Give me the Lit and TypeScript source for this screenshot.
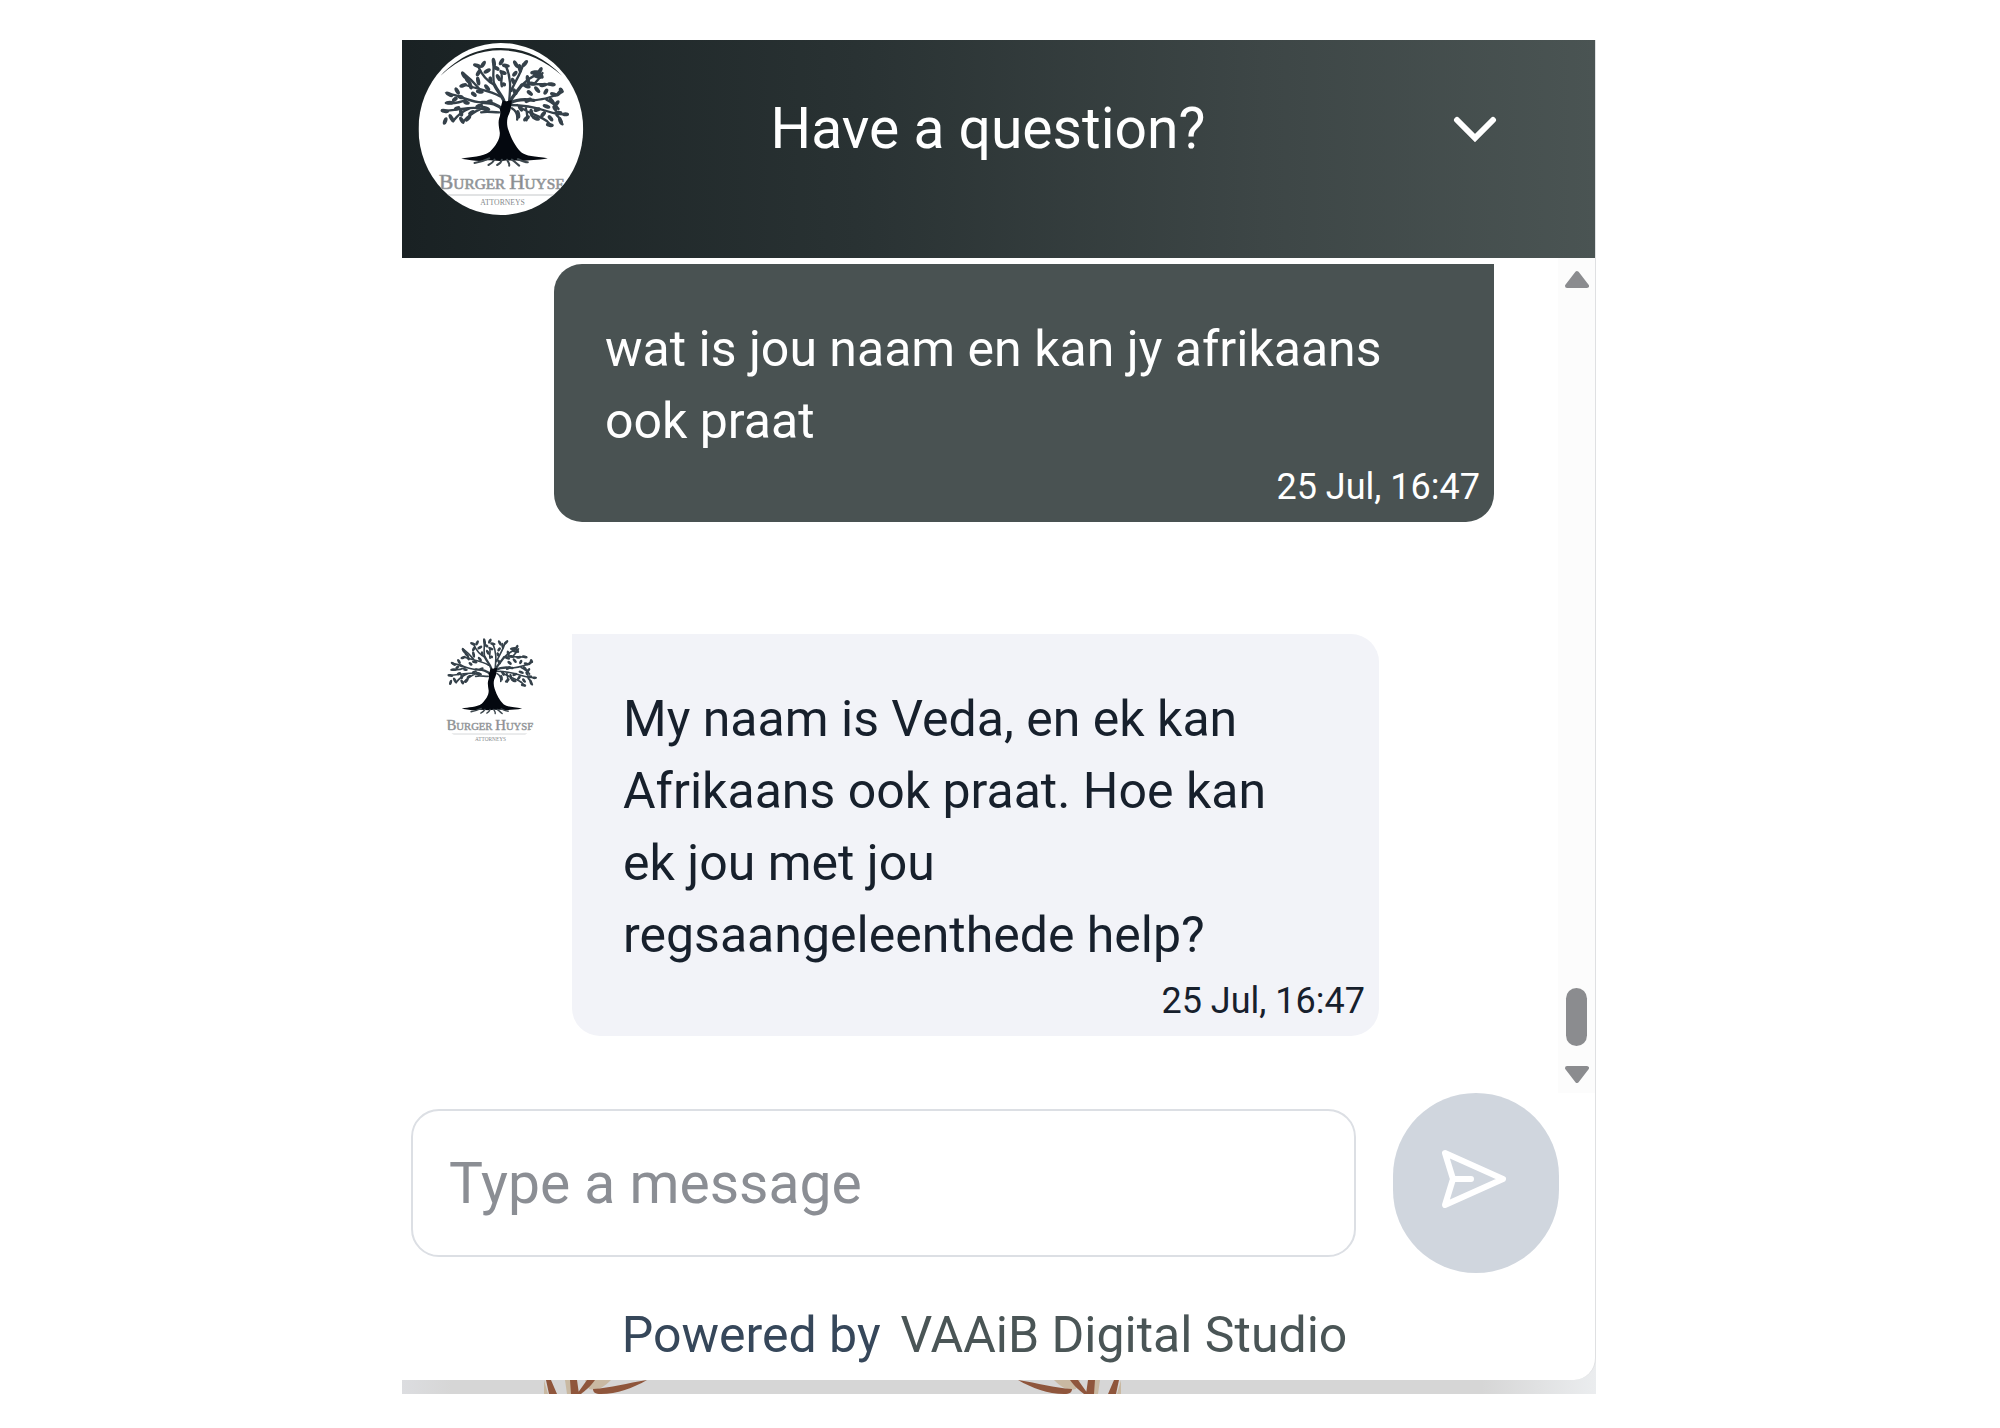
import { LitElement, html, css, svg } from "lit";
import { customElement, property } from "lit/decorators.js";

interface Message {
  from: "user" | "bot";
  text: string;
  time: string;
}

const messages: Message[] = [
  { from: "user", text: "wat is jou naam en kan jy afrikaans ook praat", time: "25 Jul, 16:47" },
  {
    from: "bot",
    text: "My naam is Veda, en ek kan Afrikaans ook praat. Hoe kan ek jou met jou regsaangeleenthede help?",
    time: "25 Jul, 16:47",
  },
];

// Leaves of the crown: x, y, rotation in degrees, half length.
const leaves: number[][] = [
  [135, 240, 10, 13], [136, 270, -70, 12], [155, 262, 60, 14], [150, 215, 0, 13], [148, 190, 30, 13],
  [165, 205, -40, 10], [172, 180, 60, 12], [182, 198, 20, 10], [186, 268, 60, 12], [184, 245, 80, 12],
  [205, 262, -50, 12], [215, 245, -30, 11], [192, 133, 60, 13], [205, 150, 50, 14], [190, 163, -20, 12],
  [212, 165, 70, 11], [235, 150, 80, 14], [236, 125, -60, 12], [232, 104, 20, 13], [250, 100, -60, 12],
  [262, 120, -30, 12], [240, 182, 10, 12], [222, 190, 40, 10], [262, 170, 50, 12], [282, 94, 80, 14],
  [290, 112, 30, 10], [305, 92, -60, 12], [318, 104, 10, 12], [310, 125, 20, 11], [296, 140, 60, 12],
  [348, 100, 60, 13], [360, 112, 80, 13], [375, 98, -50, 13], [345, 128, -50, 10], [312, 160, 20, 7],
  [405, 124, -10, 14], [420, 120, -60, 13], [412, 136, 20, 14], [424, 134, 60, 10], [384, 146, 80, 14],
  [380, 165, 20, 13], [398, 158, 10, 12], [430, 162, -10, 12], [455, 160, 10, 13], [412, 176, 50, 12],
  [438, 182, -60, 10], [462, 190, 20, 12], [478, 186, -50, 12], [484, 178, 60, 9], [456, 210, 50, 12],
  [470, 218, -50, 12], [440, 226, 20, 12], [475, 245, 0, 13], [497, 250, 0, 10], [465, 232, 60, 10],
  [452, 262, 50, 11], [482, 270, 70, 13], [450, 282, 10, 12], [430, 250, -50, 11], [408, 262, 20, 13],
  [395, 246, 80, 13], [380, 262, -40, 12], [355, 250, 80, 13], [362, 232, 60, 11], [412, 236, -20, 11],
  [258, 232, 20, 14], [238, 225, -20, 12], [268, 212, -20, 11], [345, 182, 60, 11], [385, 208, -30, 12],
  [172, 232, -20, 10], [200, 215, 10, 10], [340, 150, 70, 10], [272, 146, 80, 10], [390, 186, 40, 11],
];

@customElement("tree-logo")
class TreeLogo extends LitElement {
  @property({ type: Boolean }) ring = false;

  static styles = css`
    :host { display: block; }
    .art { display: block; width: 100%; height: 100%; }
  `;

  render() {
    return html`
      <svg class="art" viewBox="56 36 495 516" role="img" aria-label="Burger Huyse">
        <defs>
          <clipPath id="disc"><ellipse cx="303" cy="294" rx="247" ry="258" /></clipPath>
        </defs>
        <g clip-path="url(#disc)">
          <rect x="56" y="36" width="495" height="516" fill="#fff" />
          ${this.ring
            ? svg`<path fill="#1d2527" d="M122 134C180 74 238 51 303 51s126 25 184 83C430 84 368 58 303 58S180 81 122 134z" />`
            : null}
          <g fill="none" stroke="#35414a" stroke-linecap="round" stroke-linejoin="round">
            <path stroke-width="10" d="M316 240C318 200 296 188 284 162M320 225C340 195 352 180 366 162M312 238C286 214 270 216 246 214M330 216C352 204 376 204 402 208" />
            <path stroke-width="7" d="M284 162C276 140 284 118 280 92M284 162C262 150 246 132 236 108M300 196C274 180 240 176 196 162M328 210C332 168 334 140 318 104M334 180C346 150 362 130 370 100M366 162C382 146 398 136 414 128M366 162C400 156 430 162 462 160M402 208C434 204 456 200 488 182M246 214C214 214 190 196 144 188M260 238C224 222 190 236 128 240M246 232C218 244 204 256 190 272M330 222C370 222 410 230 440 240S480 250 504 250M352 222C372 240 404 250 428 262S446 280 456 284M298 244C276 244 262 240 244 244M336 232C350 240 354 250 352 266M378 232C382 244 384 256 380 268M240 176C226 160 216 146 192 128M210 232C196 236 176 250 160 270M200 206C184 214 166 218 138 216M440 206C456 214 468 222 476 234M470 252C480 260 484 270 488 280M404 158C416 146 422 138 428 126M302 120C312 136 300 150 306 166" />
          </g>
          <g fill="#35414a">
            ${leaves.map(([x, y, r, l]) => svg`<ellipse cx="${x}" cy="${y}" rx="${l}" ry="6" transform="rotate(${r} ${x} ${y})" />`)}
          </g>
          <path fill="#04080f" d="M300 234C306 226 304 216 310 208C320 214 324 208 336 208C334 222 334 236 328 248C320 262 320 282 326 298C334 322 346 346 364 364C378 376 404 376 444 382C414 388 386 388 366 390C350 386 340 390 322 388C300 392 282 388 262 388C238 392 214 388 184 383C214 376 248 378 270 362C288 344 300 326 300 306C298 290 294 276 298 262C302 252 302 244 300 234z" />
          <path fill="none" stroke="#3d474d" stroke-width="6" stroke-linecap="round" d="M268 382C252 390 240 394 224 396M284 386C280 394 274 398 266 402M306 386C304 394 300 398 292 402M322 386C324 394 330 396 328 404M336 386C346 392 350 398 358 404M354 384C366 390 374 394 384 394" />
          <text x="306" y="475" text-anchor="middle" font-family="Liberation Serif, serif" fill="#85898c" stroke="#9a9da0" stroke-width="2"><tspan font-size="64">B</tspan><tspan font-size="46">URGER </tspan><tspan font-size="64">H</tspan><tspan font-size="46">UYSE</tspan></text>
          <path stroke="#c4c7c9" stroke-width="3" d="M130 492H476" />
          <text x="308" y="523" text-anchor="middle" font-size="23" font-family="Liberation Serif, serif" fill="#85898c">ATTORNEYS</text>
        </g>
      </svg>
    `;
  }
}

@customElement("chat-message")
class ChatMessage extends LitElement {
  @property({ attribute: false }) message!: Message;

  static styles = css`
    :host { display: block; }
    .row { display: flex; align-items: flex-start; }
    .row.user { padding: 0 64px 0 152px; }
    .row.bot { padding: 0 179px 0 30px; gap: 25px; }
    .avatar { flex: none; width: 115px; height: 120px; margin-top: -6px; }
    .bubble { flex: 1; min-width: 0; padding-bottom: 14px; }
    .user .bubble { background: #495252; color: #fff; border-radius: 28px 0 28px 28px; }
    .bot .bubble { background: #f2f3f8; color: #17202c; border-radius: 0 28px 28px 28px; }
    .text { margin: 0; padding: 49px 52px 0 51px; font-size: 50px; line-height: 72px; }
    .time { display: block; padding: 9px 14px 0; font-size: 36px; line-height: 42px; text-align: right; }
  `;

  render() {
    const m = this.message;
    return html`
      <div class="row ${m.from}">
        ${m.from === "bot" ? html`<tree-logo class="avatar"></tree-logo>` : null}
        <div class="bubble">
          <p class="text">${m.text}</p>
          <time class="time">${m.time}</time>
        </div>
      </div>
    `;
  }
}

@customElement("app-root")
class AppRoot extends LitElement {
  static styles = css`
    :host {
      display: block;
      box-sizing: border-box;
      min-height: 100vh;
      padding: 40px 2px 34px 0;
      background: #fff;
      font-family: Roboto, "Liberation Sans", sans-serif;
    }
    * { box-sizing: border-box; }
    .frame {
      max-width: 1194px;
      margin: 0 auto;
      background: linear-gradient(90deg, #dcdde0 0, #d6d6d6 50px, #d6d6d6 1080px, #ebedef 100%);
    }
    .widget {
      background: #fff;
      border-right: 1px solid #dfe0e2;
      border-bottom-right-radius: 22px;
      overflow: hidden;
    }
    .header {
      display: grid;
      grid-template-columns: 166px 1fr 166px;
      align-items: center;
      padding: 3px 38px 43px 16px;
      margin-right: -1px;
      background: linear-gradient(90deg, #192123, #293233 38%, #3d4646 72%, #4a5453);
      color: #fff;
    }
    .logo { width: 166px; height: 172px; }
    .title { margin: 0; font-size: 57px; line-height: 68px; font-weight: 400; text-align: center; }
    .icon-button {
      display: flex;
      align-items: center;
      justify-content: center;
      border: 0;
      padding: 0;
      background: none;
      color: #fff;
      height: 100px;
      cursor: pointer;
    }
    .icon { display: block; }
    .body { display: flex; }
    .messages {
      flex: 1;
      min-width: 0;
      display: flex;
      flex-direction: column;
      gap: 112px;
      padding: 6px 0 57px;
    }
    .scrollbar {
      flex: none;
      width: 37px;
      display: flex;
      flex-direction: column;
      align-items: center;
      padding: 12px 0 9px;
      background: #fcfcfc;
    }
    .thumb { width: 21px; height: 58px; margin: auto 0 19px; border-radius: 11px; background: #8b8c8f; }
    .composer { display: flex; align-items: center; gap: 37px; padding: 0 36px 0 9px; }
    .field {
      flex: 1;
      min-width: 0;
      height: 148px;
      padding: 0 36px;
      border: 2px solid #dcdfe4;
      border-radius: 28px;
      outline: none;
      background: #fff;
      color: #17202c;
      font: 400 57px/68px Roboto, "Liberation Sans", sans-serif;
    }
    .field::placeholder { color: #8b8e94; opacity: 1; }
    .send { flex: none; width: 166px; height: 180px; border-radius: 83px; background: #d0d6de; }
    .footer {
      display: flex;
      justify-content: center;
      gap: 20px;
      padding: 32px 28px 15px 0;
      font-size: 50px;
      line-height: 60px;
      color: #36475a;
    }
    .brand { color: #4a5556; text-decoration: none; }
    .backdrop { display: flex; justify-content: space-between; height: 14px; padding: 0 472px 0 139px; }
    .flip { transform: scaleX(-1); }
  `;

  private sprig(cls: string) {
    return html`
      <svg class="icon ${cls}" width="110" height="14" viewBox="0 0 110 14" aria-hidden="true">
        <path fill="#c9b9a2" d="M24 0h12v14H26zM44 0h26C62 8 56 11 48 9zM3 0l4 14H3z" />
        <path fill="#8f563c" d="M5 0h5l6 14H8zM29 0h7l2 14h-8zM46 0h8c-5 7-10 11-14 14h-4zM52 9c18-1 34-6 54-9C92 8 76 14 60 14c-6 0-8-2-8-5z" />
      </svg>
    `;
  }

  render() {
    return html`
      <main class="frame">
        <section class="widget">
          <header class="header">
            <tree-logo class="logo" ring></tree-logo>
            <h1 class="title">Have a question?</h1>
            <button class="icon-button" type="button" aria-label="Close chat">
              <svg class="icon" width="44" height="26" viewBox="0 0 44 26" fill="none" stroke="currentColor" stroke-width="6" stroke-linecap="round" stroke-linejoin="miter">
                <path d="M4 4l18 18L40 4" />
              </svg>
            </button>
          </header>
          <div class="body">
            <div class="messages">
              ${messages.map((m) => html`<chat-message .message=${m}></chat-message>`)}
            </div>
            <div class="scrollbar" aria-hidden="true">
              <svg class="icon" width="24" height="19" viewBox="0 0 24 19" fill="#8b8c8f" stroke="#8b8c8f" stroke-width="4" stroke-linejoin="round">
                <path d="M12 3L22 16H2z" />
              </svg>
              <div class="thumb"></div>
              <svg class="icon" width="24" height="19" viewBox="0 0 24 19" fill="#8b8c8f" stroke="#8b8c8f" stroke-width="4" stroke-linejoin="round">
                <path d="M12 16L22 3H2z" />
              </svg>
            </div>
          </div>
          <form class="composer" @submit=${(e: Event) => e.preventDefault()}>
            <input class="field" type="text" placeholder="Type a message" aria-label="Type a message" />
            <button class="icon-button send" type="submit" aria-label="Send">
              <svg class="icon" width="84" height="84" viewBox="0 0 84 84" fill="none" stroke="currentColor" stroke-width="6" stroke-linecap="round" stroke-linejoin="round">
                <path d="M11 12L69 38L11 64L19 38zM19 38H37" />
              </svg>
            </button>
          </form>
          <footer class="footer">
            <span>Powered by</span>
            <a class="brand" href="#">VAAiB Digital Studio</a>
          </footer>
        </section>
        <div class="backdrop">${this.sprig("")}${this.sprig("flip")}</div>
      </main>
    `;
  }
}
